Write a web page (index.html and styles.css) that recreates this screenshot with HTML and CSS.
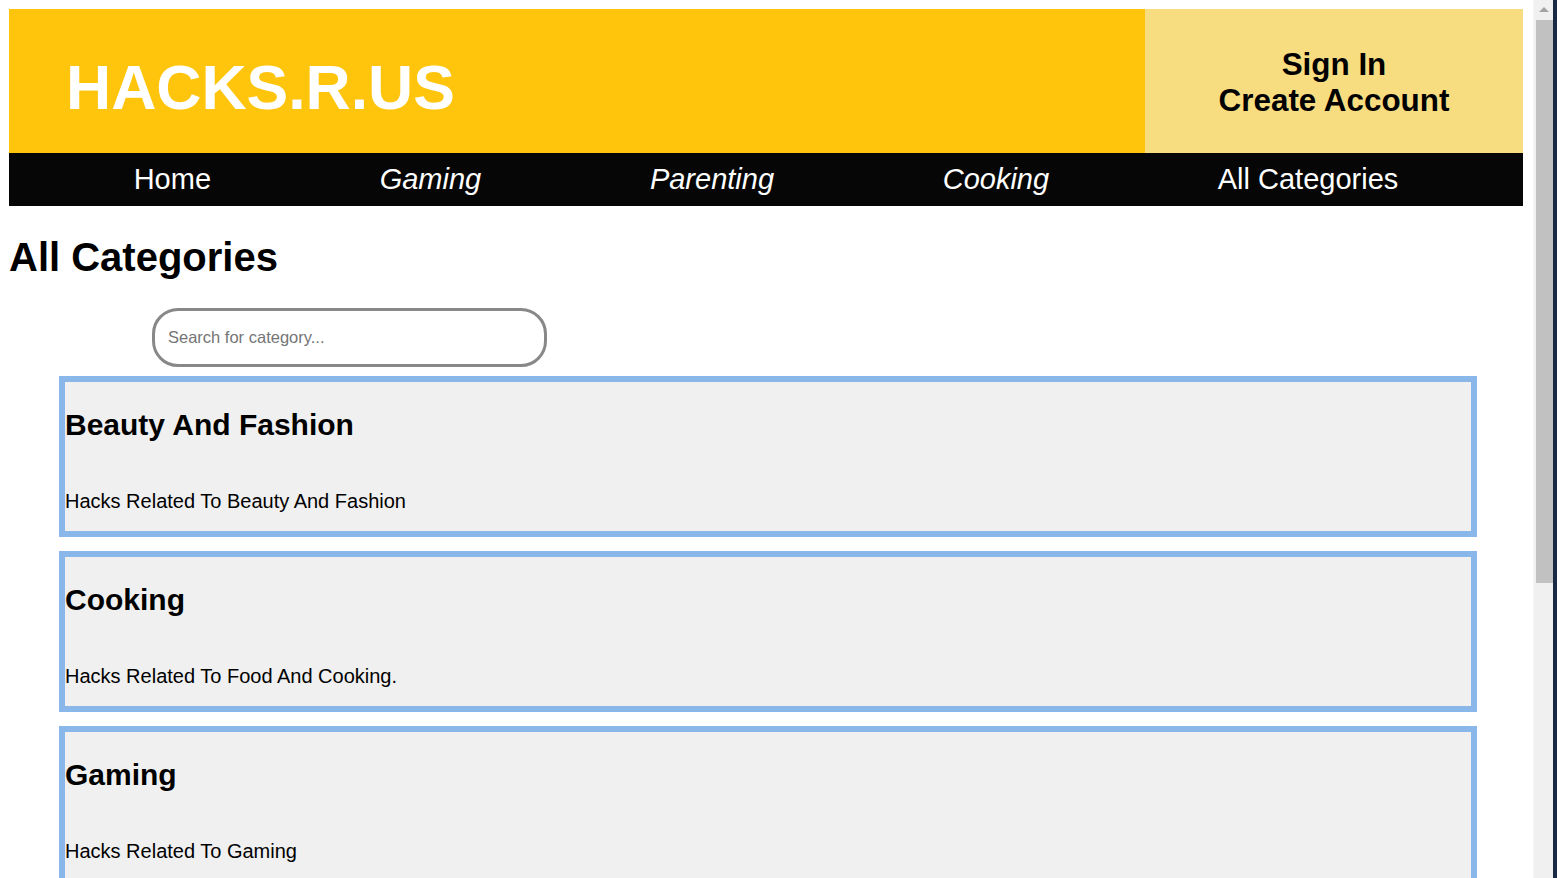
FILE: index.html
```html
<!DOCTYPE html>
<html lang="en">
<head>
<meta charset="utf-8">
<title>HACKS.R.US - All Categories</title>
<link rel="stylesheet" href="styles.css">
</head>
<body>
<header class="site-header">
  <div class="brand"><a class="logo" href="#">HACKS.R.US</a></div>
  <div class="account">
    <a href="#">Sign In</a>
    <a href="#">Create Account</a>
  </div>
</header>
<nav class="main-nav">
  <a href="#">Home</a>
  <a href="#" class="cat">Gaming</a>
  <a href="#" class="cat">Parenting</a>
  <a href="#" class="cat">Cooking</a>
  <a href="#">All Categories</a>
</nav>
<main>
  <h1 class="page-title">All Categories</h1>
  <input class="search" type="text" placeholder="Search for category...">
  <section class="card">
    <h2>Beauty And Fashion</h2>
    <p>Hacks Related To Beauty And Fashion</p>
  </section>
  <section class="card">
    <h2>Cooking</h2>
    <p>Hacks Related To Food And Cooking.</p>
  </section>
  <section class="card">
    <h2>Gaming</h2>
    <p>Hacks Related To Gaming</p>
  </section>
</main>
<div class="fake-scrollbar" aria-hidden="true">
  <div class="track">
    <div class="arrow"></div>
    <div class="thumb"></div>
  </div>
  <div class="edge"></div>
</div>
</body>
</html>
```
FILE: styles.css
```css
html {
  scrollbar-width: none;
}
html::-webkit-scrollbar {
  display: none;
}
body {
  margin: 9px 34px 9px 9px;
  font-family: "Liberation Sans", Arial, sans-serif;
  color: #000;
  background: #fff;
}
a {
  color: inherit;
  text-decoration: none;
}
.site-header {
  display: flex;
  height: 144px;
}
.brand {
  flex: 1;
  background: #ffc40c;
  padding: 42px 0 0 57px;
}
.logo {
  font-size: 62.5px;
  font-weight: bold;
  color: #fff;
}
.account {
  width: 378px;
  background: #f8dc80;
  display: flex;
  flex-direction: column;
  align-items: center;
  justify-content: center;
  padding-top: 4px;
  box-sizing: border-box;
}
.account a {
  font-size: 31.4px;
  font-weight: bold;
  line-height: 36px;
}
.main-nav {
  display: flex;
  justify-content: space-evenly;
  align-items: center;
  height: 53px;
  background: #060606;
}
.main-nav a {
  color: #fff;
  font-size: 29px;
  padding: 0 44px;
}
.main-nav a.cat {
  font-style: italic;
}
.page-title {
  font-size: 40px;
  font-weight: bold;
  margin: 29px 0 28px;
}
.search {
  display: block;
  box-sizing: border-box;
  width: 395px;
  height: 59px;
  margin: 0 0 9px 143px;
  padding: 0 0 0 13px;
  border: 3px solid #888;
  border-radius: 26px;
  font-family: "Liberation Sans", Arial, sans-serif;
  font-size: 16.5px;
  outline: none;
}
.search::placeholder {
  color: #757575;
}
.card {
  display: flex;
  flex-direction: column;
  margin: 0 46px 14px 50px;
  border: 6px solid #8ab7ea;
  background: #f0f0f0;
}
.card h2 {
  font-size: 30px;
  line-height: 35px;
  font-weight: bold;
  margin: 25px 0 27px;
}
.card p {
  font-size: 20px;
  line-height: 23px;
  margin: 21px 0 18px;
}
.fake-scrollbar {
  position: fixed;
  top: 0;
  right: 0;
  bottom: 0;
  width: 24px;
  display: flex;
}
.track {
  width: 20px;
  background: #f0f0f0;
  border-left: 1px solid #f7f7f7;
  box-sizing: border-box;
  position: relative;
}
.arrow {
  position: absolute;
  top: 7px;
  left: 5px;
  width: 0;
  height: 0;
  border-left: 5px solid transparent;
  border-right: 5px solid transparent;
  border-bottom: 5px solid #a3a3a3;
}
.thumb {
  position: absolute;
  top: 20px;
  left: 2px;
  width: 17px;
  height: 563px;
  background: #c1c1c1;
}
.edge {
  width: 4px;
  background: #1b2a44;
}
```
